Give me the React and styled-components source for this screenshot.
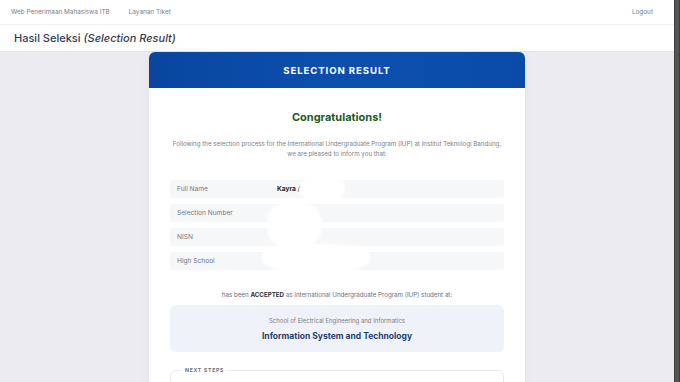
import React from 'react';
import styled, {createGlobalStyle} from 'styled-components';

const GlobalStyle = createGlobalStyle`
    html::-webkit-scrollbar {
        display: none;
    }
    body {
        margin: 0;
        padding-right: 6px;
        background: #ececf0;
        font-family: Inter, "Noto Sans", sans-serif;
    }
`;

// the browser's scrollbar seen on the right edge of the capture
const ScrollTrack = styled.div`
    position: fixed;
    top: 0;
    right: 0;
    bottom: 0;
    width: 6px;
    background: #3d3d3d;

    &::after {
        content: '';
        position: absolute;
        top: 0;
        bottom: 0;
        left: 1px;
        width: 4px;
        background: #555;
    }
`;

const TopNav = styled.nav`
    height: 24px;
    display: flex;
    align-items: center;
    padding: 0 21px 0 11px;
    background: #fff;
    border-bottom: 1px solid #f0f0f2;
    font-size: 6.4px;
    color: #7a7d88;
`;

const NavLink = styled.span`
    margin-right: ${props => props.gap || 0}px;
    margin-left: ${props => props.push ? 'auto' : '0'};
`;

const TitleBar = styled.header`
    height: 26px;
    display: flex;
    align-items: center;
    padding-left: 14px;
    background: #fff;
    border-bottom: 1px solid #e4e4ea;
    font-size: 11px;
    font-weight: 500;
    color: #363a4f;

    em {
        margin-left: 3px;
    }
`;

const Main = styled.main`
    display: flex;
    justify-content: center;
    padding-bottom: 40px;
`;

const Card = styled.section`
    width: 376px;
    background: #fff;
    border-radius: 6px 6px 0 0;
    box-shadow: 0 0 10px rgba(0, 0, 0, 0.05);
    overflow: hidden;
`;

const CardHeader = styled.div`
    height: 36px;
    display: flex;
    align-items: center;
    justify-content: center;
    background: linear-gradient(90deg, #0a46a0 0%, #0b4fac 50%, #0a4ba8 100%);
    color: #fff;
    font-size: 9.6px;
    font-weight: 700;
    letter-spacing: 0.9px;
`;

const CardBody = styled.div`
    padding: 22px 21px 40px;
`;

const Heading = styled.h2`
    margin: 0;
    text-align: center;
    font-size: 11px;
    font-weight: 700;
    color: #1f5a26;
`;

const Intro = styled.p`
    margin: 15px 0 21px;
    text-align: center;
    font-size: 6.2px;
    line-height: 10px;
    white-space: nowrap;
    color: #7b7e88;
`;

const InfoList = styled.div`
    position: relative;
    display: flex;
    flex-direction: column;
    gap: 6px;
`;

const InfoRow = styled.div`
    height: 18px;
    display: grid;
    grid-template-columns: 107px 1fr;
    align-items: center;
    background: #f6f7f9;
    border-radius: 3px;
    font-size: 6.6px;
`;

const Label = styled.span`
    padding-left: 7px;
    color: #747783;
`;

const Value = styled.span`
    font-weight: 700;
    color: #23252e;
`;

const Redact = styled.div`
    position: absolute;
    background: #fff;
    border-radius: 40%;
    filter: blur(1.5px);
`;

const Accepted = styled.p`
    margin: 21px 0 7px;
    text-align: center;
    font-size: 6.2px;
    color: #6b6e7a;

    strong {
        color: #2c2e36;
    }
`;

const ProgramBox = styled.div`
    height: 47px;
    display: flex;
    flex-direction: column;
    align-items: center;
    justify-content: center;
    gap: 7px;
    background: #f0f2f9;
    border-radius: 6px;
`;

const Faculty = styled.div`
    font-size: 6px;
    color: #7a7d88;
`;

const Program = styled.div`
    font-size: 8.5px;
    font-weight: 700;
    color: #213f6e;
`;

const NextSteps = styled.fieldset`
    margin: 15px 0 0;
    padding: 0 10px 30px;
    border: 1px solid #e8e9ee;
    border-radius: 6px;

    legend {
        padding: 0 4px;
        font-size: 5.2px;
        font-weight: 700;
        letter-spacing: 0.7px;
        color: #6c6f7c;
    }
`;

const rows = [
    {label: 'Full Name', value: 'Kayra /'},
    {label: 'Selection Number', value: ''},
    {label: 'NISN', value: ''},
    {label: 'High School', value: ''},
];

const App = () => (
    <>
        <GlobalStyle />
        <ScrollTrack />
        <TopNav>
            <NavLink gap={19}>Web Penerimaan Mahasiswa ITB</NavLink>
            <NavLink>Layanan Tiket</NavLink>
            <NavLink push>Logout</NavLink>
        </TopNav>
        <TitleBar>
            Hasil Seleksi <em>(Selection Result)</em>
        </TitleBar>
        <Main>
            <Card>
                <CardHeader>SELECTION RESULT</CardHeader>
                <CardBody>
                    <Heading>Congratulations!</Heading>
                    <Intro>
                        Following the selection process for the International Undergraduate Program (IUP) at Institut Teknologi Bandung,
                        <br />
                        we are pleased to inform you that:
                    </Intro>
                    <InfoList>
                        {rows.map(row => (
                            <InfoRow key={row.label}>
                                <Label>{row.label}</Label>
                                <Value>{row.value}</Value>
                            </InfoRow>
                        ))}
                        <Redact style={{left: 129, top: -2, width: 46, height: 22}} />
                        <Redact style={{left: 97, top: 22, width: 54, height: 46}} />
                        <Redact style={{left: 92, top: 64, width: 108, height: 28}} />
                    </InfoList>
                    <Accepted>
                        has been <strong>ACCEPTED</strong> as International Undergraduate Program (IUP) student at:
                    </Accepted>
                    <ProgramBox>
                        <Faculty>School of Electrical Engineering and Informatics</Faculty>
                        <Program>Information System and Technology</Program>
                    </ProgramBox>
                    <NextSteps>
                        <legend>NEXT STEPS</legend>
                    </NextSteps>
                </CardBody>
            </Card>
        </Main>
    </>
);

export default App;
